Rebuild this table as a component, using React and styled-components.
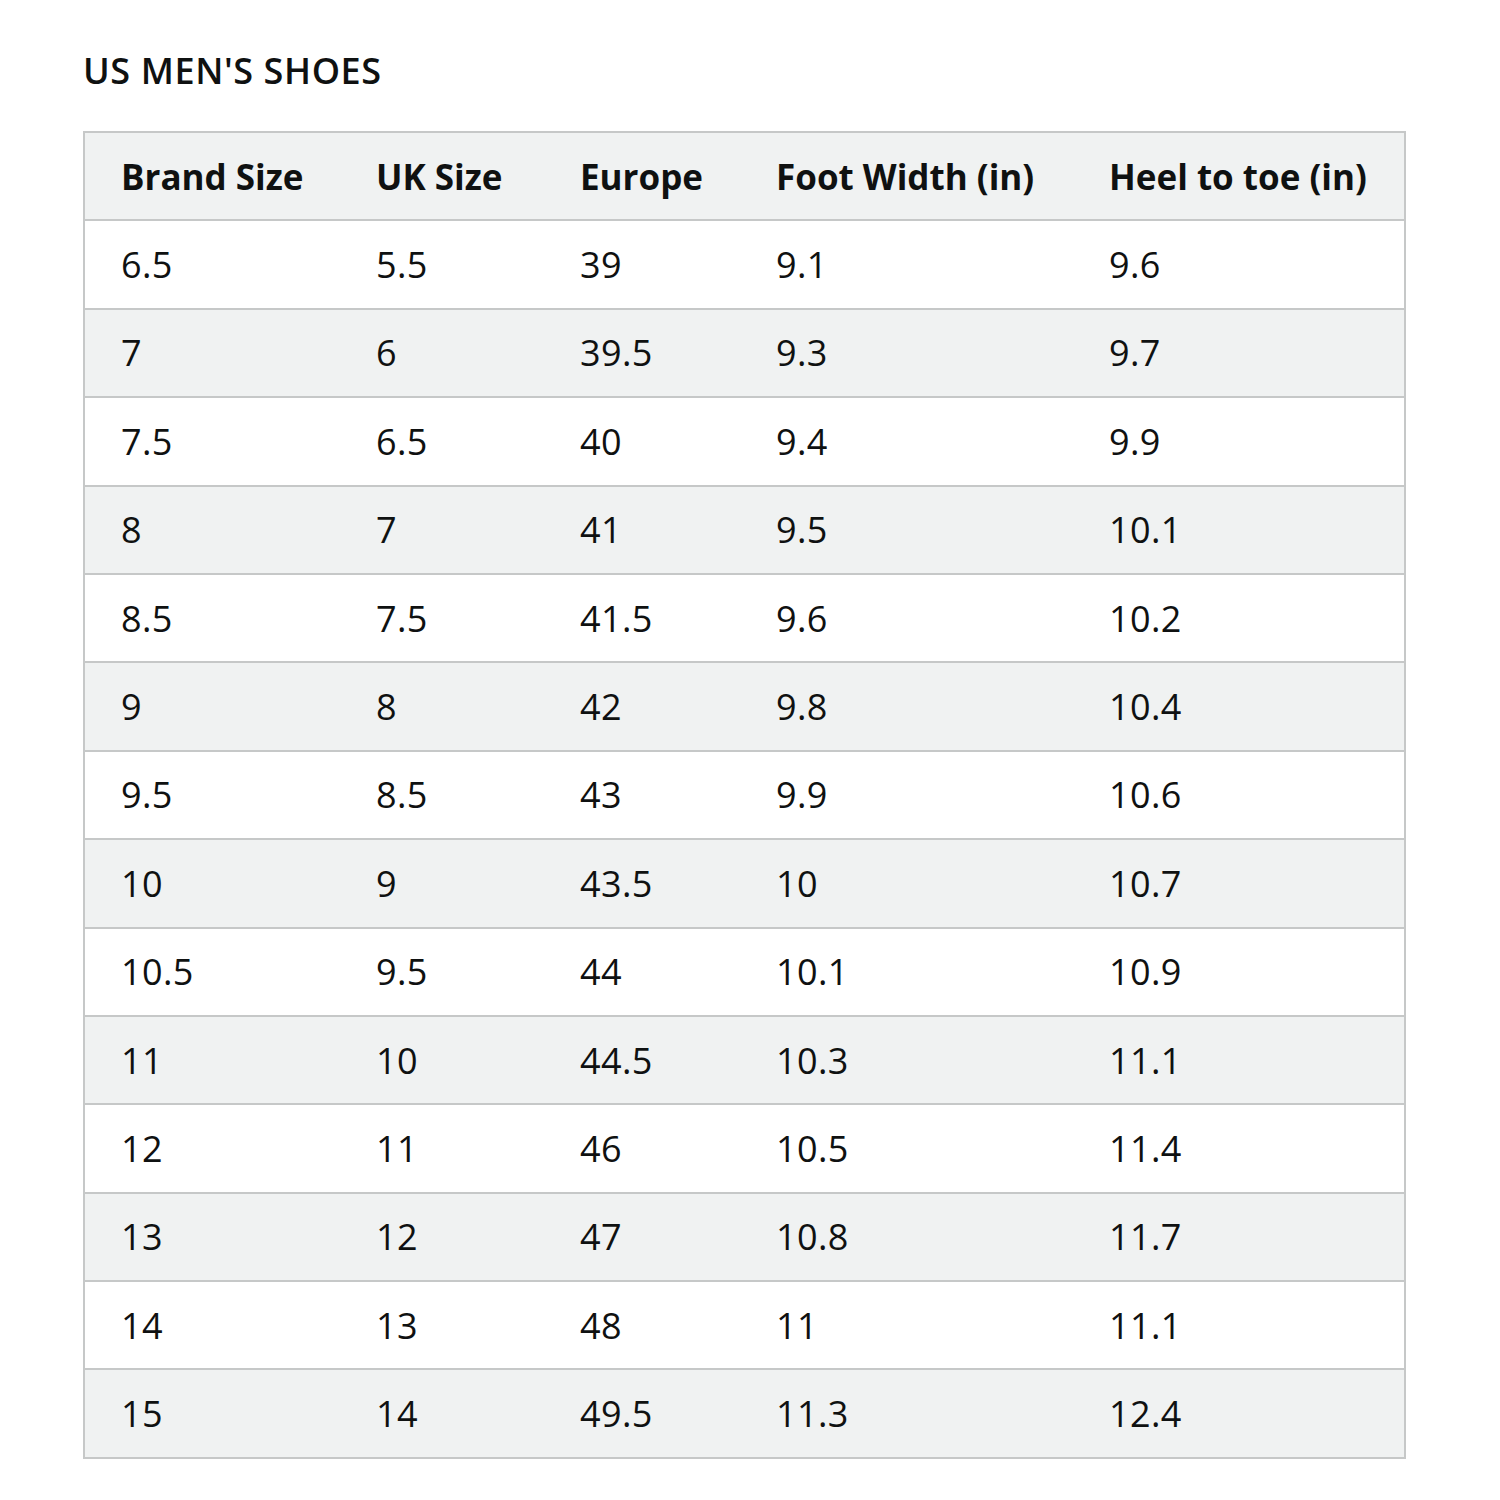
import React from 'react';
import styled, { createGlobalStyle } from 'styled-components';

const GlobalStyle = createGlobalStyle`
  body {
    margin: 0;
    background: #ffffff;
    font-family: "Open Sans", "Noto Sans", sans-serif;
    color: #0f1111;
  }
`;

const Page = styled.div`
  width: 1500px;
  height: 1500px;
  padding: 48px 0 0 83px;
  box-sizing: border-box;
`;

const Title = styled.h2`
  margin: 0 0 37px 0;
  font-size: 36px;
  font-weight: 600;
  line-height: 46px;
  letter-spacing: 0.6px;
`;

const Table = styled.table`
  width: 1321px;
  border-collapse: collapse;
  table-layout: fixed;
  border: 2px solid #c6c8c8;
`;

const Row = styled.tr`
  background: ${(p) => (p.$shaded ? '#f0f2f2' : '#ffffff')};
  border-bottom: 2px solid #c6c8c8;
  height: 88.4px;
`;

const HeadCell = styled.th`
  text-align: left;
  padding: 0 0 0 36px;
  font-size: 35px;
  font-weight: 700;
  letter-spacing: 0px;
`;

const Cell = styled.td`
  padding: 0 0 0 36px;
  font-size: 36px;
  font-weight: 400;
  letter-spacing: 0.4px;
`;

const headers = ['Brand Size', 'UK Size', 'Europe', 'Foot Width (in)', 'Heel to toe (in)'];
const widths = [256, 204, 196, 333, 332];

const rows = [
  ['6.5', '5.5', '39', '9.1', '9.6'],
  ['7', '6', '39.5', '9.3', '9.7'],
  ['7.5', '6.5', '40', '9.4', '9.9'],
  ['8', '7', '41', '9.5', '10.1'],
  ['8.5', '7.5', '41.5', '9.6', '10.2'],
  ['9', '8', '42', '9.8', '10.4'],
  ['9.5', '8.5', '43', '9.9', '10.6'],
  ['10', '9', '43.5', '10', '10.7'],
  ['10.5', '9.5', '44', '10.1', '10.9'],
  ['11', '10', '44.5', '10.3', '11.1'],
  ['12', '11', '46', '10.5', '11.4'],
  ['13', '12', '47', '10.8', '11.7'],
  ['14', '13', '48', '11', '11.1'],
  ['15', '14', '49.5', '11.3', '12.4'],
];

export default function App() {
  return (
    <Page>
      <GlobalStyle />
      <Title>US MEN'S SHOES</Title>
      <Table>
        <colgroup>
          {widths.map((w, i) => (
            <col key={i} style={{ width: w }} />
          ))}
        </colgroup>
        <thead>
          <Row $shaded>
            {headers.map((h) => (
              <HeadCell key={h}>{h}</HeadCell>
            ))}
          </Row>
        </thead>
        <tbody>
          {rows.map((r, i) => (
            <Row key={i} $shaded={i % 2 === 1}>
              {r.map((v, j) => (
                <Cell key={j}>{v}</Cell>
              ))}
            </Row>
          ))}
        </tbody>
      </Table>
    </Page>
  );
}
